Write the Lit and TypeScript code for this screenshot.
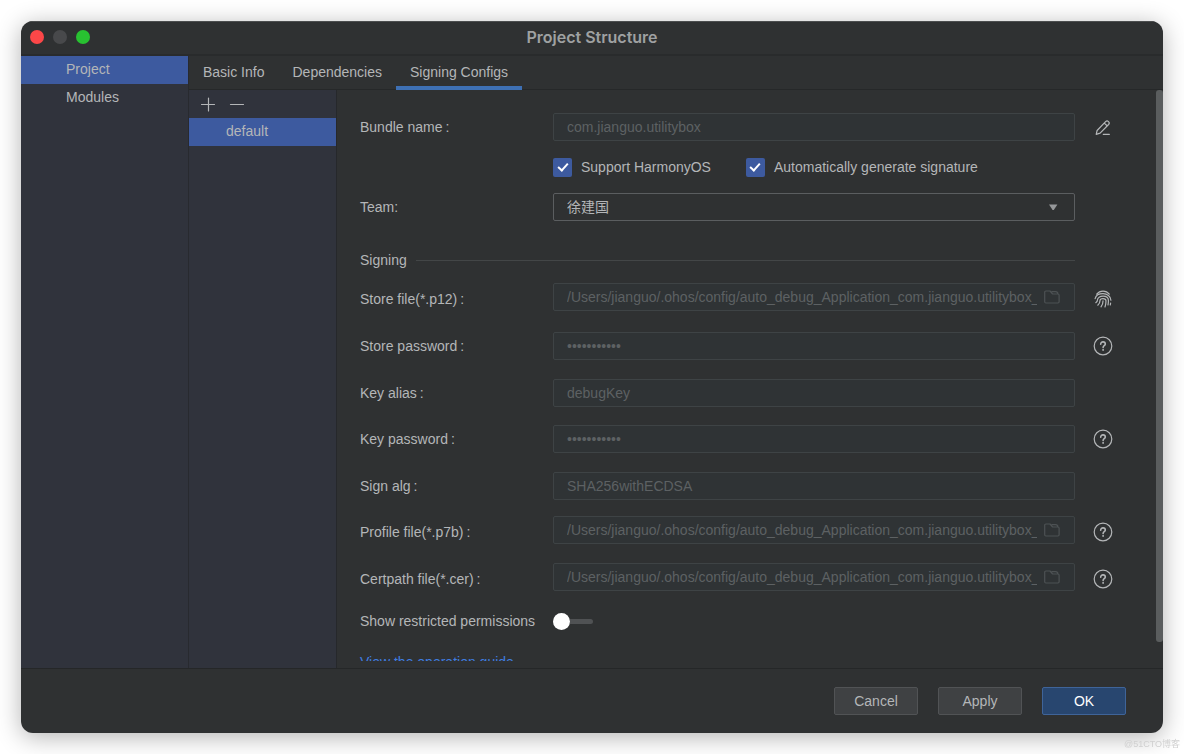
import { LitElement, html, css, svg, nothing } from "lit";
import { customElement, property, state } from "lit/decorators.js";
import { classMap } from "lit/directives/class-map.js";

type IconName = "pencil" | "fingerprint" | "help" | "folder" | "plus" | "minus" | "caret";

const ICONS: Record<IconName, unknown> = {
  pencil: svg`
    <path d="M3.200 17.300 4.100 13.500 12.600 4.700a2 2 0 0 1 3 2.800L7.100 16.200z M11.300 6.100l2.800 2.700"/>
    <path d="M10.300 17.400h6"/>`,
  fingerprint: svg`
    <path d="M3.700 5.200C5.200 3.200 7.400 2.100 10 2.100s4.800 1.100 6.300 3.100"/>
    <path d="M2.100 9.600C2.900 6.600 6 4.700 10 4.700s7.900 2.400 7.900 6.500"/>
    <path d="M2.800 13.700c1.200-.8 1.700-1.800 1.700-2.900C4.500 8.500 7 7.200 10 7.200s5.400 1.600 5.400 4.300c0 1.600 0 3-.4 4.500"/>
    <path d="M4.800 16.200c1.700-1.500 2.200-3 2.200-4.700 0-1.200 1.300-1.900 3-1.900s3 .8 3 2.200c0 2.200-.3 4.200-1 6.200"/>
    <path d="M8 17.900c1.400-1.800 2-3.800 2-6"/>
    <path d="M17.600 14l-.3 1.800"/>`,
  help: svg`
    <circle cx="10" cy="10" r="8.800"/>
    <path class="bold" d="M7.700 8.200c0-1.400 1-2.300 2.300-2.300s2.300.9 2.300 2.100c0 1.700-2.200 1.700-2.200 3.500"/>
    <path class="bold" d="M10.100 13.600v.6"/>`,
  folder: svg`
    <path d="M2.700 5.200c0-.7.500-1.200 1.200-1.200h4.100l2.600 3h5.300c.7 0 1.200.5 1.200 1.200v6.600c0 .7-.5 1.200-1.200 1.200H3.900c-.7 0-1.200-.5-1.200-1.200z M10 4.600h3.600c1.200 0 2.200.8 2.400 2.200"/>`,
  plus: svg`<path d="M3.500 10.500h13M10.500 4v13"/>`,
  minus: svg`<path d="M3.500 10.500h13"/>`,
  caret: svg`<path class="solid" d="M6 7.500h8.400L10.800 13h-1.200z"/>`,
};

@customElement("ps-icon")
export class PsIcon extends LitElement {
  @property() name: IconName = "help";

  static styles = css`
    :host { display: inline-flex; width: 20px; height: 20px; flex: none; }
    .glyph { width: 100%; height: 100%; fill: none; stroke: currentColor; stroke-width: 1.2; stroke-linecap: round; stroke-linejoin: round; }
    .glyph .bold { stroke-width: 1.6; }
    .glyph .solid { fill: currentColor; stroke: none; }
  `;

  render() {
    return html`<svg class="glyph" viewBox="0 0 20 20" aria-hidden="true">${ICONS[this.name]}</svg>`;
  }
}

interface Field {
  id: string;
  label: string;
  value: string;
  kind: "text" | "password" | "file";
  action?: IconName;
  actionLabel?: string;
}

const MATERIAL_DIR = "/Users/jianguo/.ohos/config/auto_debug_Application_com.jianguo.utilitybox_";

const BUNDLE: Field = { id: "bundle", label: "Bundle name", value: "com.jianguo.utilitybox", kind: "text", action: "pencil", actionLabel: "Edit bundle name" };

const SIGNING: Field[][] = [
  [
    { id: "store-file", label: "Store file(*.p12)", value: MATERIAL_DIR, kind: "file", action: "fingerprint", actionLabel: "Generate key" },
    { id: "store-password", label: "Store password", value: "storepasswd", kind: "password", action: "help", actionLabel: "Help" },
    { id: "key-alias", label: "Key alias", value: "debugKey", kind: "text" },
  ],
  [
    { id: "key-password", label: "Key password", value: "keypassword", kind: "password", action: "help", actionLabel: "Help" },
    { id: "sign-alg", label: "Sign alg", value: "SHA256withECDSA", kind: "text" },
  ],
  [
    { id: "profile-file", label: "Profile file(*.p7b)", value: MATERIAL_DIR, kind: "file", action: "help", actionLabel: "Help" },
    { id: "cert-file", label: "Certpath file(*.cer)", value: MATERIAL_DIR, kind: "file", action: "help", actionLabel: "Help" },
  ],
];

@customElement("app-root")
export class AppRoot extends LitElement {
  @state() private section = "Project";
  @state() private tab = "Signing Configs";

  static styles = css`
    :host {
      display: block;
      box-sizing: border-box;
      height: 100vh;
      padding: 21px;
      overflow: hidden;
      background: #fff;
      color: #b4b6b8;
      font: 14px/20px "Liberation Sans", "Noto Sans CJK SC", Arial, sans-serif;
    }
    *, *::before, *::after { box-sizing: border-box; }
    button, input, select { font: inherit; color: inherit; margin: 0; }
    button { padding: 0; border: 0; background: none; }

    .window {
      display: flex;
      flex-direction: column;
      height: 100%;
      border-radius: 12px;
      overflow: hidden;
      background: #2f3132;
      box-shadow: 0 4px 24px rgba(0, 0, 0, 0.3);
    }
    .titlebar {
      display: grid;
      grid-template-columns: 1fr auto 1fr;
      align-items: center;
      height: 35px;
      flex: none;
      padding: 0 9px 2px;
      border-top: 1px solid #4c4e4f;
      border-bottom: 2px solid #292b2c;
    }
    .lights { display: flex; gap: 9px; }
    .light { width: 14px; height: 14px; border-radius: 50%; }
    .light.close { background: #fc4748; }
    .light.minimize { background: #48494b; }
    .light.zoom { background: #28c131; }
    .title { margin: 0; font: 600 16px/20px Inter, sans-serif; color: #9fa1a2; }

    .body { display: flex; flex: 1; min-height: 0; border-bottom: 1px solid #252728; }
    .sections {
      display: flex;
      flex-direction: column;
      width: 168px;
      flex: none;
      background: #30333c;
      border-right: 1px solid #282a2f;
    }
    .section { height: 28px; padding: 0 0 2px 45px; text-align: left; }
    .selected { background: #3d5a9f; }
    .main { display: flex; flex-direction: column; flex: 1; min-width: 0; }
    .tabs { display: flex; height: 34px; flex: none; border-bottom: 1px solid #262829; }
    .tab { height: 34px; padding: 0 14px; border-bottom: 4px solid transparent; border-top: 2px solid transparent; }
    .tab.current { border-bottom-color: #3e70b4; }
    .panes { display: flex; flex: 1; min-height: 0; }
    .configs { display: flex; flex-direction: column; width: 148px; flex: none; background: #30333c; border-right: 1px solid #26282b; }
    .tools { display: flex; gap: 9px; height: 28px; padding: 4px 0 0 9px; flex: none; }
    .tools .tool { display: flex; height: 20px; color: #b4b6b8; }
    .config { height: 28px; padding: 0 0 2px 37px; text-align: left; }

    .viewport { flex: 1; min-width: 0; overflow: hidden; margin-bottom: 7px; }
    .form { display: flex; flex-direction: column; gap: 14px; padding: 21px 43px 0 23px; }
    .group { display: flex; flex-direction: column; gap: 15px; }
    .groups { display: flex; flex-direction: column; gap: 14px; }
    .row { display: grid; grid-template-columns: 193px minmax(0, 1fr) 20px; align-items: center; min-height: 32px; }
    .row.file { align-items: start; }
    .row.file .label, .row.file .action { align-self: center; }
    .colon { margin-left: 3px; }
    .control {
      display: flex;
      align-items: center;
      height: 28px;
      margin-right: 18px;
      border: 1px solid #3e4345;
      border-radius: 2px;
      background: #2f3335;
      color: #5d6163;
    }
    .control .input { flex: 1; min-width: 0; height: 100%; padding: 0 13px; border: 0; outline: 0; background: none; }
    .row.file .input { padding-right: 0; }
    .browse { display: flex; margin: 0 12px 0 5px; color: #4d5254; }
    .action { display: flex; color: #b4b6b8; }
    .control.select { position: relative; border-color: #5b5e60; background: none; color: #b4b6b8; }
    .control.select .input { appearance: none; }
    .control.select .caret { position: absolute; right: 11px; pointer-events: none; color: #96989a; }

    .checks { display: flex; gap: 35px; margin-left: 193px; height: 20px; }
    .check { display: flex; align-items: center; gap: 9px; }
    .box { appearance: none; display: grid; place-items: start center; width: 19px; height: 19px; padding-top: 3px; border-radius: 2px; background: #4a4d50; }
    .box:checked { background: #3d5a9f; }
    .box:checked::after { content: ""; width: 6px; height: 10px; border: solid #fff; border-width: 0 2px 2px 0; transform: rotate(42deg); }

    .divider { display: flex; align-items: center; gap: 9px; height: 18px; margin: 14px 38px 0 0; }
    .divider .heading { margin: 0; font: inherit; }
    .divider::after { content: ""; flex: 1; height: 1px; background: #434647; }

    .switch { appearance: none; display: flex; align-items: center; width: 40px; height: 17px; }
    .switch::before { content: ""; width: 17px; height: 17px; border-radius: 50%; background: #fff; }
    .switch::after { content: ""; flex: 1; height: 5px; border-radius: 0 3px 3px 0; background: #505254; }
    .switch:checked { flex-direction: row-reverse; }
    .row.restricted { min-height: 24px; }
    .guide { align-self: flex-start; margin-top: 5px; color: #3f7de0; text-decoration: none; }

    .scrollbar { width: 7px; flex: none; padding-bottom: 26px; }
    .thumb { height: 100%; border-radius: 3px; background: #5a5d5e; }

    .footer { display: flex; justify-content: flex-end; gap: 20px; flex: none; height: 64px; padding: 18px 37px; }
    .button { width: 84px; height: 28px; border: 1px solid #515355; border-radius: 2px; background: #3f4143; }
    .button.primary { border-color: #3f6499; background: #28466f; color: #fff; }
    .watermark { position: fixed; right: 4px; bottom: 2px; font-size: 9px; line-height: 16px; color: #d0d0d0; }
  `;

  private renderField(f: Field) {
    return html`
      <div class=${classMap({ row: true, file: f.kind === "file" })}>
        <label class="label" for=${f.id}>${f.label}<span class="colon">:</span></label>
        <div class="control">
          <input class="input" id=${f.id} type=${f.kind === "password" ? "password" : "text"} .value=${f.value} readonly />
          ${f.kind === "file"
            ? html`<button class="browse" type="button" aria-label="Browse"><ps-icon name="folder"></ps-icon></button>`
            : nothing}
        </div>
        ${f.action
          ? html`<button class="action" type="button" aria-label=${f.actionLabel ?? ""}><ps-icon name=${f.action}></ps-icon></button>`
          : nothing}
      </div>
    `;
  }

  render() {
    return html`
      <div class="window">
        <header class="titlebar">
          <div class="lights">
            <button class="light close" aria-label="Close"></button>
            <button class="light minimize" aria-label="Minimize"></button>
            <button class="light zoom" aria-label="Zoom"></button>
          </div>
          <h1 class="title">Project Structure</h1>
        </header>
        <div class="body">
          <nav class="sections">
            ${["Project", "Modules"].map((name) => html`
              <button class=${classMap({ section: true, selected: name === this.section })} @click=${() => (this.section = name)}>${name}</button>`)}
          </nav>
          <div class="main">
            <div class="tabs" role="tablist">
              ${["Basic Info", "Dependencies", "Signing Configs"].map((name) => html`
                <button class=${classMap({ tab: true, current: name === this.tab })} role="tab" aria-selected=${name === this.tab} @click=${() => (this.tab = name)}>${name}</button>`)}
            </div>
            <div class="panes">
              <aside class="configs">
                <div class="tools">
                  <button class="tool" aria-label="Add"><ps-icon name="plus"></ps-icon></button>
                  <button class="tool" aria-label="Remove"><ps-icon name="minus"></ps-icon></button>
                </div>
                <button class="config selected">default</button>
              </aside>
              <div class="viewport">
                <form class="form" @submit=${(e: Event) => e.preventDefault()}>
                  ${this.renderField(BUNDLE)}
                  <div class="checks">
                    <label class="check"><input class="box" type="checkbox" checked />Support HarmonyOS</label>
                    <label class="check"><input class="box" type="checkbox" checked />Automatically generate signature</label>
                  </div>
                  <div class="row">
                    <label class="label" for="team">Team:</label>
                    <div class="control select">
                      <select class="input" id="team"><option>徐建国</option></select>
                      <ps-icon class="caret" name="caret"></ps-icon>
                    </div>
                  </div>
                  <div class="divider"><h2 class="heading">Signing</h2></div>
                  <div class="groups">
                    ${SIGNING.map((group) => html`<div class="group">${group.map((f) => this.renderField(f))}</div>`)}
                  </div>
                  <div class="row restricted">
                    <label class="label" for="restricted">Show restricted permissions</label>
                    <input class="switch" id="restricted" type="checkbox" role="switch" />
                  </div>
                  <a class="guide" href="#guide">View the operation guide</a>
                </form>
              </div>
              <div class="scrollbar"><div class="thumb"></div></div>
            </div>
          </div>
        </div>
        <footer class="footer">
          <button class="button">Cancel</button>
          <button class="button">Apply</button>
          <button class="button primary">OK</button>
        </footer>
      </div>
      <div class="watermark">@51CTO博客</div>
    `;
  }
}
